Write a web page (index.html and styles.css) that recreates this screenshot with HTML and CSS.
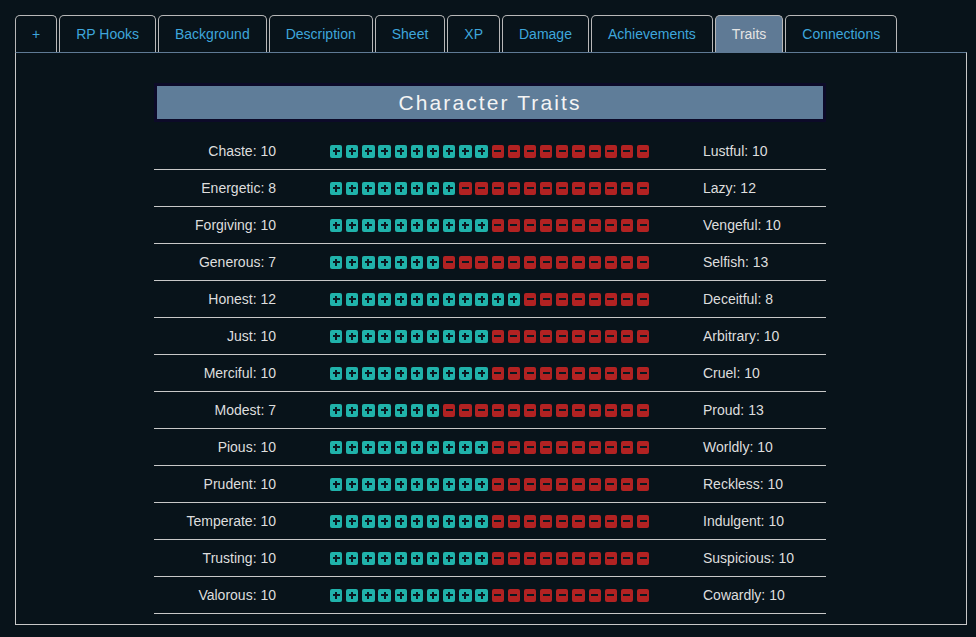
FILE: index.html
```html
<!DOCTYPE html>
<html>
<head>
<meta charset="utf-8">
<link rel="stylesheet" href="styles.css">
</head>
<body>
<div class="tabs">
  <div class="tab">+</div>
  <div class="tab">RP Hooks</div>
  <div class="tab">Background</div>
  <div class="tab">Description</div>
  <div class="tab">Sheet</div>
  <div class="tab">XP</div>
  <div class="tab">Damage</div>
  <div class="tab">Achievements</div>
  <div class="tab active">Traits</div>
  <div class="tab">Connections</div>
</div>
<div class="panel">
  <div class="title">Character Traits</div>
  <div class="traits">
    <div class="row"><div class="lt">Chaste: 10</div><div class="bar"><i class="p"></i><i class="p"></i><i class="p"></i><i class="p"></i><i class="p"></i><i class="p"></i><i class="p"></i><i class="p"></i><i class="p"></i><i class="p"></i><i class="m"></i><i class="m"></i><i class="m"></i><i class="m"></i><i class="m"></i><i class="m"></i><i class="m"></i><i class="m"></i><i class="m"></i><i class="m"></i></div><div class="rt">Lustful: 10</div></div>
    <div class="row"><div class="lt">Energetic: 8</div><div class="bar"><i class="p"></i><i class="p"></i><i class="p"></i><i class="p"></i><i class="p"></i><i class="p"></i><i class="p"></i><i class="p"></i><i class="m"></i><i class="m"></i><i class="m"></i><i class="m"></i><i class="m"></i><i class="m"></i><i class="m"></i><i class="m"></i><i class="m"></i><i class="m"></i><i class="m"></i><i class="m"></i></div><div class="rt">Lazy: 12</div></div>
    <div class="row"><div class="lt">Forgiving: 10</div><div class="bar"><i class="p"></i><i class="p"></i><i class="p"></i><i class="p"></i><i class="p"></i><i class="p"></i><i class="p"></i><i class="p"></i><i class="p"></i><i class="p"></i><i class="m"></i><i class="m"></i><i class="m"></i><i class="m"></i><i class="m"></i><i class="m"></i><i class="m"></i><i class="m"></i><i class="m"></i><i class="m"></i></div><div class="rt">Vengeful: 10</div></div>
    <div class="row"><div class="lt">Generous: 7</div><div class="bar"><i class="p"></i><i class="p"></i><i class="p"></i><i class="p"></i><i class="p"></i><i class="p"></i><i class="p"></i><i class="m"></i><i class="m"></i><i class="m"></i><i class="m"></i><i class="m"></i><i class="m"></i><i class="m"></i><i class="m"></i><i class="m"></i><i class="m"></i><i class="m"></i><i class="m"></i><i class="m"></i></div><div class="rt">Selfish: 13</div></div>
    <div class="row"><div class="lt">Honest: 12</div><div class="bar"><i class="p"></i><i class="p"></i><i class="p"></i><i class="p"></i><i class="p"></i><i class="p"></i><i class="p"></i><i class="p"></i><i class="p"></i><i class="p"></i><i class="p"></i><i class="p"></i><i class="m"></i><i class="m"></i><i class="m"></i><i class="m"></i><i class="m"></i><i class="m"></i><i class="m"></i><i class="m"></i></div><div class="rt">Deceitful: 8</div></div>
    <div class="row"><div class="lt">Just: 10</div><div class="bar"><i class="p"></i><i class="p"></i><i class="p"></i><i class="p"></i><i class="p"></i><i class="p"></i><i class="p"></i><i class="p"></i><i class="p"></i><i class="p"></i><i class="m"></i><i class="m"></i><i class="m"></i><i class="m"></i><i class="m"></i><i class="m"></i><i class="m"></i><i class="m"></i><i class="m"></i><i class="m"></i></div><div class="rt">Arbitrary: 10</div></div>
    <div class="row"><div class="lt">Merciful: 10</div><div class="bar"><i class="p"></i><i class="p"></i><i class="p"></i><i class="p"></i><i class="p"></i><i class="p"></i><i class="p"></i><i class="p"></i><i class="p"></i><i class="p"></i><i class="m"></i><i class="m"></i><i class="m"></i><i class="m"></i><i class="m"></i><i class="m"></i><i class="m"></i><i class="m"></i><i class="m"></i><i class="m"></i></div><div class="rt">Cruel: 10</div></div>
    <div class="row"><div class="lt">Modest: 7</div><div class="bar"><i class="p"></i><i class="p"></i><i class="p"></i><i class="p"></i><i class="p"></i><i class="p"></i><i class="p"></i><i class="m"></i><i class="m"></i><i class="m"></i><i class="m"></i><i class="m"></i><i class="m"></i><i class="m"></i><i class="m"></i><i class="m"></i><i class="m"></i><i class="m"></i><i class="m"></i><i class="m"></i></div><div class="rt">Proud: 13</div></div>
    <div class="row"><div class="lt">Pious: 10</div><div class="bar"><i class="p"></i><i class="p"></i><i class="p"></i><i class="p"></i><i class="p"></i><i class="p"></i><i class="p"></i><i class="p"></i><i class="p"></i><i class="p"></i><i class="m"></i><i class="m"></i><i class="m"></i><i class="m"></i><i class="m"></i><i class="m"></i><i class="m"></i><i class="m"></i><i class="m"></i><i class="m"></i></div><div class="rt">Worldly: 10</div></div>
    <div class="row"><div class="lt">Prudent: 10</div><div class="bar"><i class="p"></i><i class="p"></i><i class="p"></i><i class="p"></i><i class="p"></i><i class="p"></i><i class="p"></i><i class="p"></i><i class="p"></i><i class="p"></i><i class="m"></i><i class="m"></i><i class="m"></i><i class="m"></i><i class="m"></i><i class="m"></i><i class="m"></i><i class="m"></i><i class="m"></i><i class="m"></i></div><div class="rt">Reckless: 10</div></div>
    <div class="row"><div class="lt">Temperate: 10</div><div class="bar"><i class="p"></i><i class="p"></i><i class="p"></i><i class="p"></i><i class="p"></i><i class="p"></i><i class="p"></i><i class="p"></i><i class="p"></i><i class="p"></i><i class="m"></i><i class="m"></i><i class="m"></i><i class="m"></i><i class="m"></i><i class="m"></i><i class="m"></i><i class="m"></i><i class="m"></i><i class="m"></i></div><div class="rt">Indulgent: 10</div></div>
    <div class="row"><div class="lt">Trusting: 10</div><div class="bar"><i class="p"></i><i class="p"></i><i class="p"></i><i class="p"></i><i class="p"></i><i class="p"></i><i class="p"></i><i class="p"></i><i class="p"></i><i class="p"></i><i class="m"></i><i class="m"></i><i class="m"></i><i class="m"></i><i class="m"></i><i class="m"></i><i class="m"></i><i class="m"></i><i class="m"></i><i class="m"></i></div><div class="rt">Suspicious: 10</div></div>
    <div class="row"><div class="lt">Valorous: 10</div><div class="bar"><i class="p"></i><i class="p"></i><i class="p"></i><i class="p"></i><i class="p"></i><i class="p"></i><i class="p"></i><i class="p"></i><i class="p"></i><i class="p"></i><i class="m"></i><i class="m"></i><i class="m"></i><i class="m"></i><i class="m"></i><i class="m"></i><i class="m"></i><i class="m"></i><i class="m"></i><i class="m"></i></div><div class="rt">Cowardly: 10</div></div>
  </div>
</div>
</body>
</html>
```
FILE: styles.css
```css
html, body {
  margin: 0;
  background: #08131a;
}
body {
  padding: 15px 9px 0 15px;
  font-family: "Liberation Sans", Arial, sans-serif;
  font-size: 14px;
  color: #dedede;
}
.tabs {
  display: flex;
  gap: 2px;
  height: 37px;
}
.tab {
  box-sizing: border-box;
  height: 37px;
  padding: 0 16px;
  border: 1px solid #b8b8b8;
  border-bottom: none;
  border-radius: 5px 5px 0 0;
  color: #3ea6dc;
  display: flex;
  align-items: center;
  justify-content: center;
  white-space: nowrap;
}
.tab.active {
  background: #5f7a95;
  color: #e4e4e4;
}
.panel {
  box-sizing: border-box;
  width: 952px;
  height: 573px;
  border: 1px solid #c8c8c8;
  border-top: 1px solid #5f7a95;
  padding: 30px 0 0 138px;
  display: flex;
  flex-direction: column;
  align-items: flex-start;
}
.title {
  box-sizing: border-box;
  width: 672px;
  height: 39px;
  border: 3px solid #0c0a28;
  background: #5f7d99;
  color: #f4f4f4;
  font-size: 21px;
  letter-spacing: 2.1px;
  display: flex;
  align-items: center;
  justify-content: center;
}
.traits {
  width: 672px;
  margin-top: 11px;
}
.row {
  display: flex;
  align-items: center;
  height: 36px;
  border-bottom: 1px solid #c8c8c8;
}
.lt {
  width: 122px;
  text-align: right;
}
.bar {
  width: 320px;
  margin: 0 53px 0 54px;
  display: flex;
  gap: 3.86px;
}
.rt {
  flex: 1;
}
.p, .m {
  display: block;
  width: 12.3px;
  height: 13px;
  border-radius: 2px;
}
.p {
  background:
    linear-gradient(#0b1820, #0b1820) center / 7px 2px no-repeat,
    linear-gradient(#0b1820, #0b1820) center / 2px 7px no-repeat,
    #20b2aa;
}
.m {
  background:
    linear-gradient(#0b1820, #0b1820) center / 7px 2px no-repeat,
    #b22222;
}
```
